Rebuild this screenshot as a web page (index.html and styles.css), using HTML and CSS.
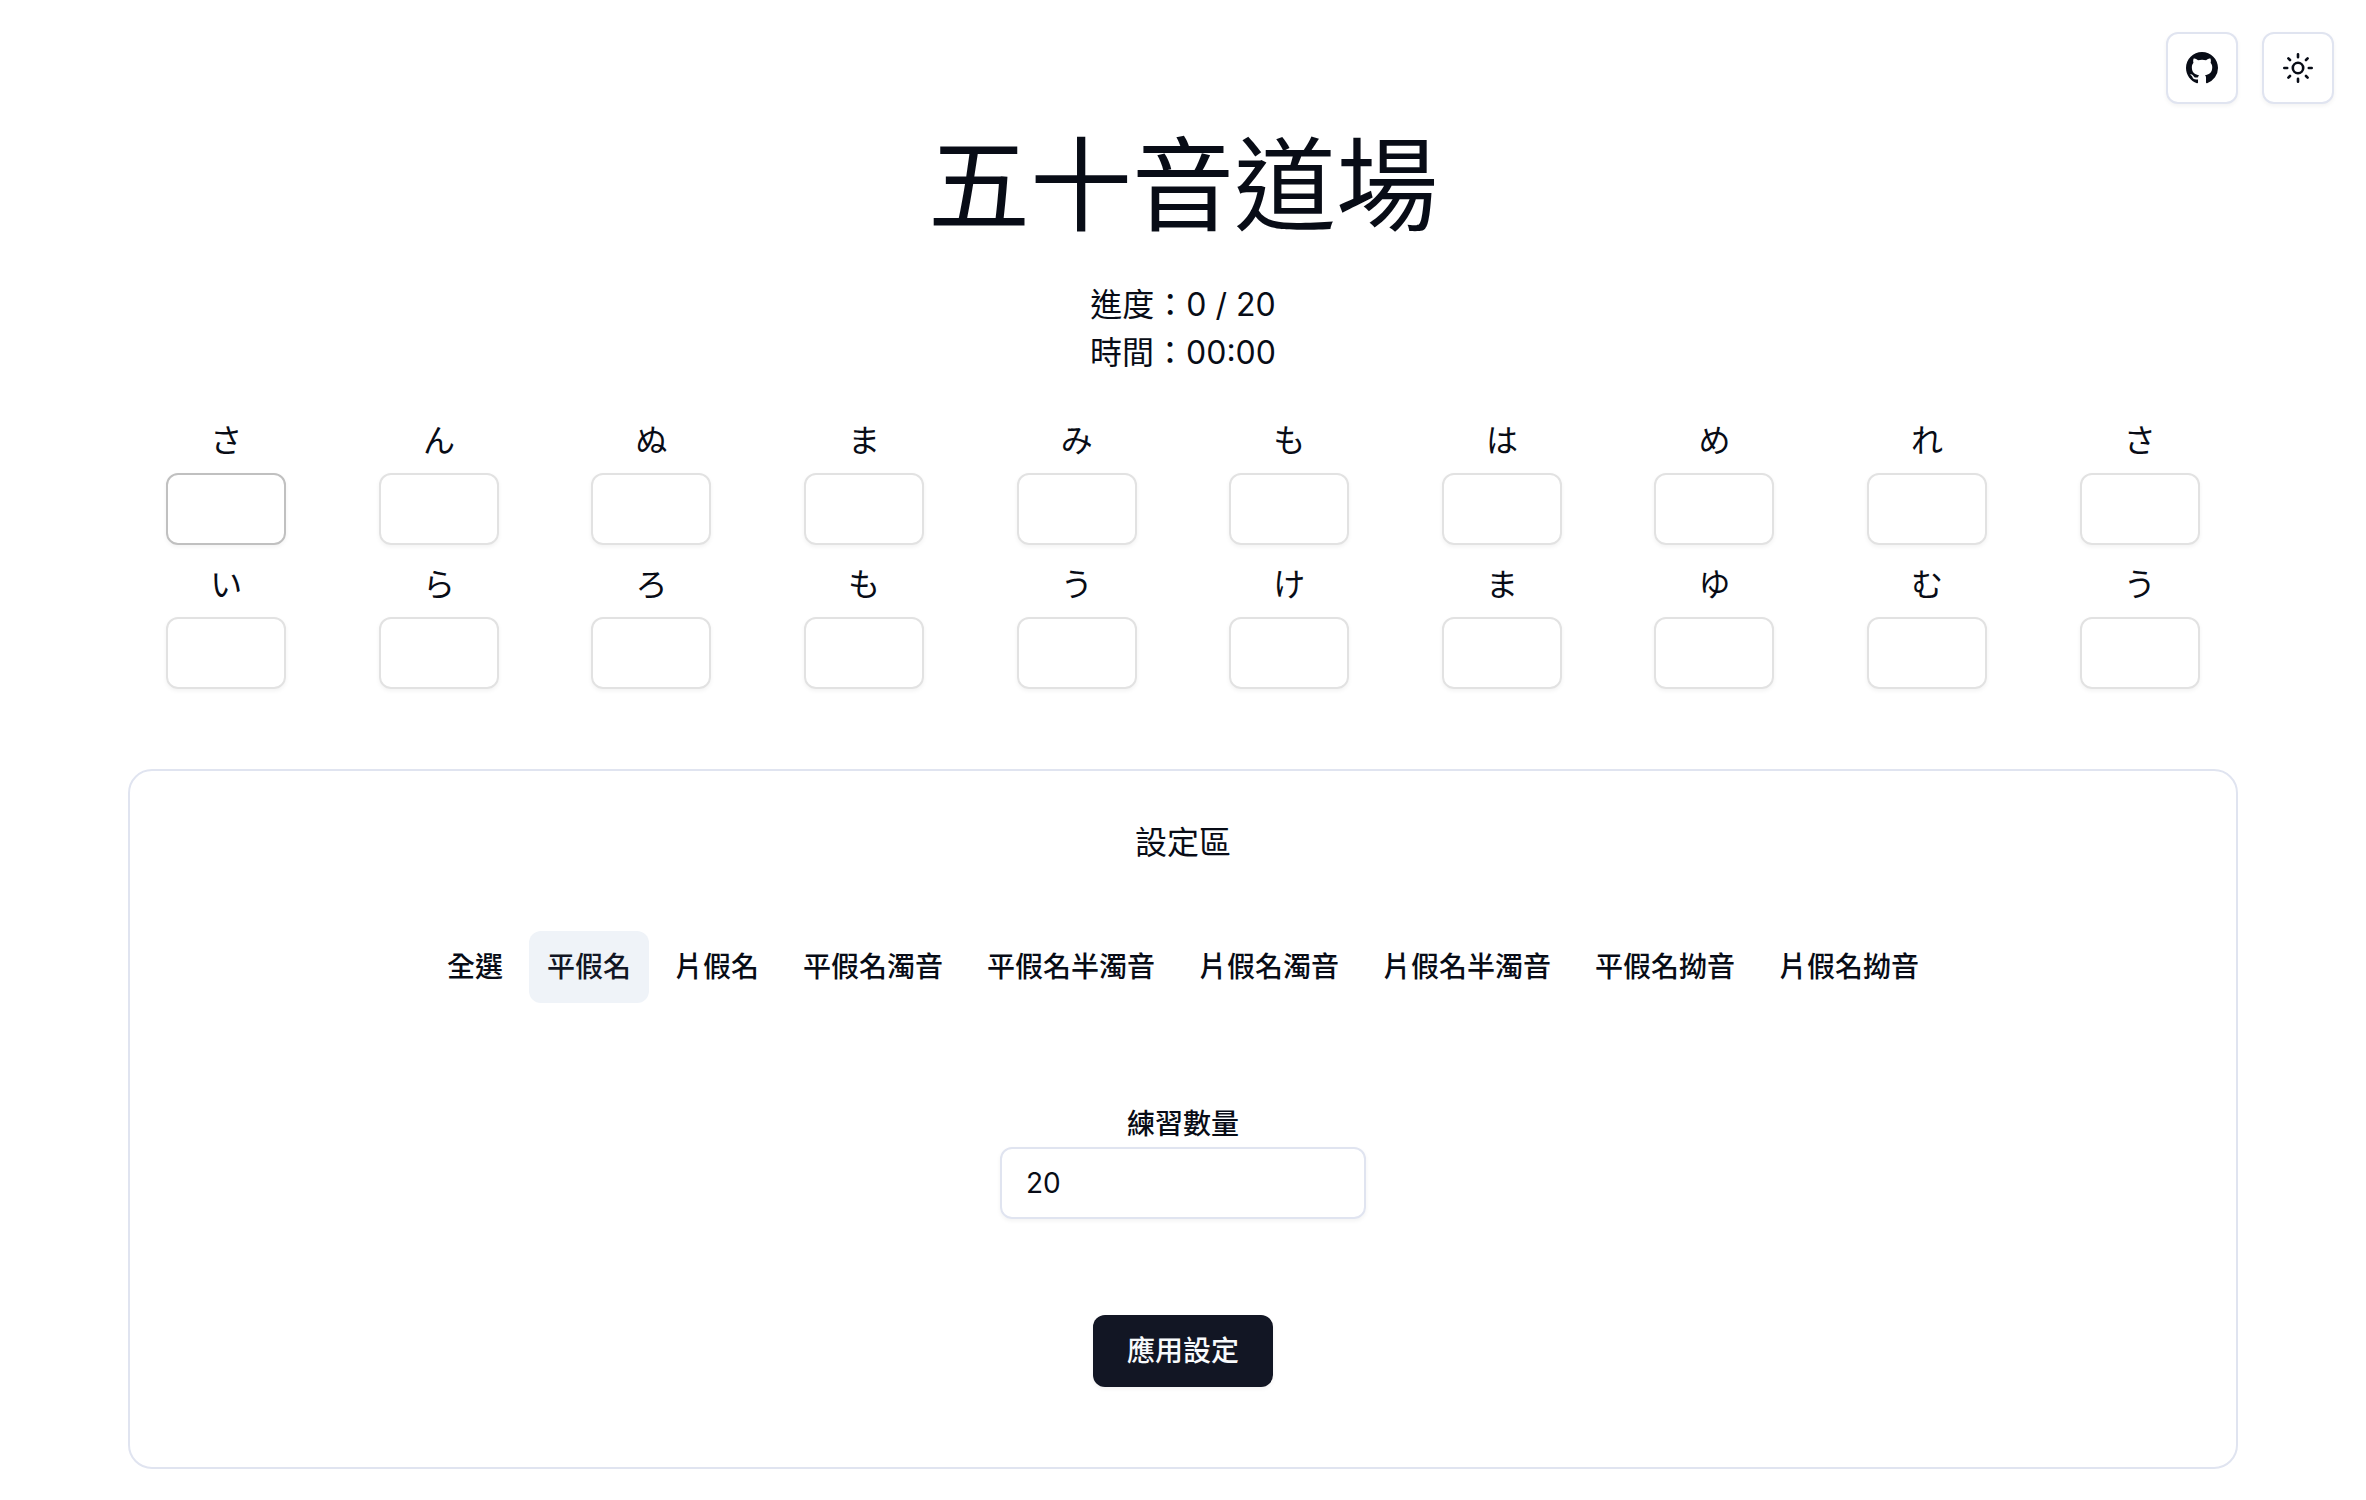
FILE: index.html
```html
<!DOCTYPE html>
<html lang="zh-Hant">
<head>
<meta charset="utf-8">
<meta name="viewport" content="width=device-width, initial-scale=1">
<title>五十音道場</title>
<link rel="stylesheet" href="styles.css">
</head>
<body>
<nav class="toolbar">
  <a class="icon-button" href="#" aria-label="GitHub">
    <svg width="32" height="32" viewBox="0 0 16 16" fill="currentColor" aria-hidden="true"><path d="M8 0C3.58 0 0 3.58 0 8c0 3.54 2.29 6.53 5.47 7.59.4.07.55-.17.55-.38 0-.19-.01-.82-.01-1.49-2.01.37-2.53-.49-2.69-.94-.09-.23-.48-.94-.82-1.13-.28-.15-.68-.52-.01-.53.63-.01 1.08.58 1.23.82.72 1.21 1.87.87 2.33.66.07-.52.28-.87.51-1.07-1.78-.2-3.64-.89-3.64-3.95 0-.87.31-1.59.82-2.15-.08-.2-.36-1.02.08-2.12 0 0 .67-.21 2.2.82.64-.18 1.32-.27 2-.27s1.36.09 2 .27c1.53-1.04 2.2-.82 2.2-.82.44 1.1.16 1.92.08 2.12.51.56.82 1.27.82 2.15 0 3.07-1.87 3.75-3.65 3.95.29.25.54.73.54 1.48 0 1.07-.01 1.93-.01 2.2 0 .21.15.46.55.38A8.01 8.01 0 0 0 16 8c0-4.42-3.58-8-8-8z"/></svg>
  </a>
  <button class="icon-button" type="button" aria-label="切換主題">
    <svg width="30" height="30" viewBox="0 0 15 15" fill="none" stroke="currentColor" stroke-width="1.3" stroke-linecap="round" aria-hidden="true"><circle cx="7.5" cy="7.5" r="2.600"/><path d="M7.5.65V2.100M7.5 12.900v1.450M.65 7.5H2.100M12.900 7.5h1.450M2.700 2.700l.8.8M11.500 11.500l.8.8M2.700 12.300l.8-.8M11.500 3.500l.8-.8"/></svg>
  </button>
</nav>
<main class="page">
  <h1 class="title">五十音道場</h1>
  <div class="status">
    <p>進度：0 / 20</p>
    <p>時間：00:00</p>
  </div>
  <div class="grid">
    <label class="cell"><span>さ</span><input class="answer answer-current" type="text"></label>
    <label class="cell"><span>ん</span><input class="answer" type="text"></label>
    <label class="cell"><span>ぬ</span><input class="answer" type="text"></label>
    <label class="cell"><span>ま</span><input class="answer" type="text"></label>
    <label class="cell"><span>み</span><input class="answer" type="text"></label>
    <label class="cell"><span>も</span><input class="answer" type="text"></label>
    <label class="cell"><span>は</span><input class="answer" type="text"></label>
    <label class="cell"><span>め</span><input class="answer" type="text"></label>
    <label class="cell"><span>れ</span><input class="answer" type="text"></label>
    <label class="cell"><span>さ</span><input class="answer" type="text"></label>
    <label class="cell"><span>い</span><input class="answer" type="text"></label>
    <label class="cell"><span>ら</span><input class="answer" type="text"></label>
    <label class="cell"><span>ろ</span><input class="answer" type="text"></label>
    <label class="cell"><span>も</span><input class="answer" type="text"></label>
    <label class="cell"><span>う</span><input class="answer" type="text"></label>
    <label class="cell"><span>け</span><input class="answer" type="text"></label>
    <label class="cell"><span>ま</span><input class="answer" type="text"></label>
    <label class="cell"><span>ゆ</span><input class="answer" type="text"></label>
    <label class="cell"><span>む</span><input class="answer" type="text"></label>
    <label class="cell"><span>う</span><input class="answer" type="text"></label>
  </div>
  <form class="settings">
    <h2 class="settings-title">設定區</h2>
    <div class="toggles">
      <button class="toggle" type="button" aria-pressed="false">全選</button>
      <button class="toggle" type="button" aria-pressed="true">平假名</button>
      <button class="toggle" type="button" aria-pressed="false">片假名</button>
      <button class="toggle" type="button" aria-pressed="false">平假名濁音</button>
      <button class="toggle" type="button" aria-pressed="false">平假名半濁音</button>
      <button class="toggle" type="button" aria-pressed="false">片假名濁音</button>
      <button class="toggle" type="button" aria-pressed="false">片假名半濁音</button>
      <button class="toggle" type="button" aria-pressed="false">平假名拗音</button>
      <button class="toggle" type="button" aria-pressed="false">片假名拗音</button>
    </div>
    <div class="field">
      <label class="field-label" for="amount">練習數量</label>
      <input class="amount" id="amount" type="text" inputmode="numeric" value="20">
    </div>
    <button class="submit" type="submit">應用設定</button>
  </form>
</main>
</body>
</html>
```
FILE: styles.css
```css
* {
  box-sizing: border-box;
  margin: 0;
}

:root {
  --ink: #080c16;
  --line: #e0e4f0;
  --shadow: 0 2px 4px rgba(0, 0, 0, 0.05);
}

body {
  background: #fff;
  color: var(--ink);
  font-family: Inter, "Noto Sans CJK TC", sans-serif;
  font-size: 32px;
  line-height: 48px;
}

button,
input {
  color: inherit;
  font: inherit;
}

.toolbar {
  display: flex;
  justify-content: flex-end;
  gap: 24px;
  padding: 32px 32px 26px;
}

.icon-button {
  display: flex;
  align-items: center;
  justify-content: center;
  width: 72px;
  height: 72px;
  padding: 0;
  border: 2px solid var(--line);
  border-radius: 12px;
  background: #fff;
  box-shadow: var(--shadow);
  color: inherit;
}

.page {
  display: flex;
  flex-direction: column;
  gap: 40px;
  padding: 0 128px 32px;
  text-align: center;
}

.title {
  font-size: 102px;
  font-weight: 400;
  line-height: 112px;
}

.status {
  margin-top: -1px;
}

.grid {
  display: grid;
  grid-template-columns: repeat(10, 1fr);
  gap: 16px;
}

.cell {
  display: flex;
  flex-direction: column;
  align-items: center;
  gap: 8px;
  font-family: Inter, "Noto Sans CJK JP", sans-serif;
}

.answer,
.amount {
  height: 72px;
  padding: 0 24px;
  border: 2px solid #e2e2e2;
  border-radius: 12px;
  background: transparent;
  box-shadow: var(--shadow);
  outline: none;
}

.answer {
  width: 120px;
}

.answer-current {
  border-color: #c0c0c0;
}

.settings {
  display: flex;
  flex-direction: column;
  align-items: center;
  gap: 64px;
  margin-top: 40px;
  padding: 48px 48px 80px;
  border: 2px solid var(--line);
  border-radius: 24px;
}

.settings-title {
  font-size: 32px;
  font-weight: 400;
}

.toggles {
  display: flex;
  flex-wrap: wrap;
  justify-content: center;
  gap: 8px;
}

.toggle,
.submit {
  height: 72px;
  border: 0;
  border-radius: 12px;
  font-size: 28px;
  font-weight: 500;
}

.toggle {
  padding: 0 18px;
  background: transparent;
}

.toggle[aria-pressed="true"] {
  background: #eff3f8;
  color: #121624;
}

.field {
  display: flex;
  flex-direction: column;
  align-items: center;
  padding: 34px 0 32px;
  font-size: 28px;
}

.field-label {
  line-height: 46px;
  font-weight: 500;
}

.amount {
  width: 366px;
  border-color: var(--line);
}

.submit {
  padding: 0 34px;
  background: #121624;
  box-shadow: var(--shadow);
  color: #f8fafc;
}
```
